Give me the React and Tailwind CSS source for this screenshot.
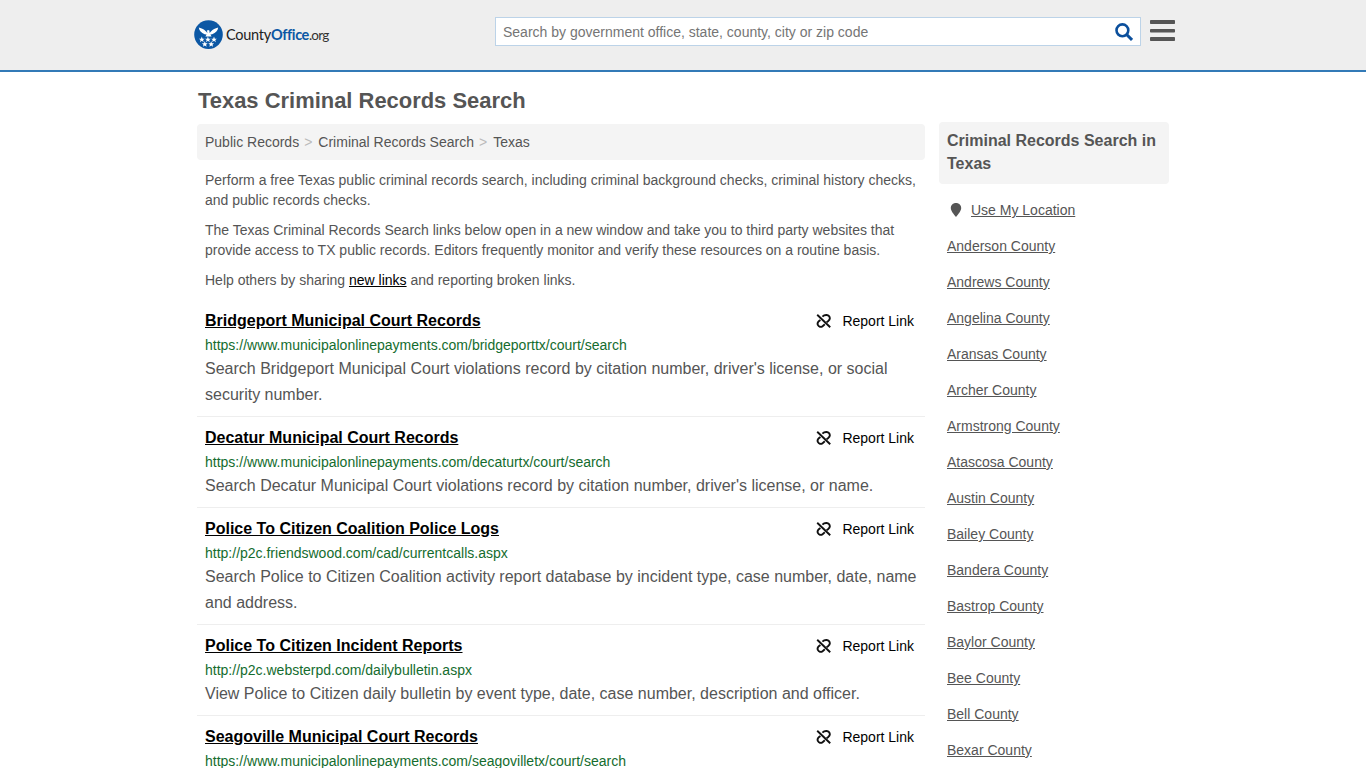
const counties = [
  'Anderson County',
  'Andrews County',
  'Angelina County',
  'Aransas County',
  'Archer County',
  'Armstrong County',
  'Atascosa County',
  'Austin County',
  'Bailey County',
  'Bandera County',
  'Bastrop County',
  'Baylor County',
  'Bee County',
  'Bell County',
  'Bexar County',
];

const records = [
  {
    title: 'Bridgeport Municipal Court Records',
    url: 'https://www.municipalonlinepayments.com/bridgeporttx/court/search',
    text: "Search Bridgeport Municipal Court violations record by citation number, driver's license, or social security number.",
  },
  {
    title: 'Decatur Municipal Court Records',
    url: 'https://www.municipalonlinepayments.com/decaturtx/court/search',
    text: "Search Decatur Municipal Court violations record by citation number, driver's license, or name.",
  },
  {
    title: 'Police To Citizen Coalition Police Logs',
    url: 'http://p2c.friendswood.com/cad/currentcalls.aspx',
    text: 'Search Police to Citizen Coalition activity report database by incident type, case number, date, name and address.',
  },
  {
    title: 'Police To Citizen Incident Reports',
    url: 'http://p2c.websterpd.com/dailybulletin.aspx',
    text: 'View Police to Citizen daily bulletin by event type, date, case number, description and officer.',
  },
  {
    title: 'Seagoville Municipal Court Records',
    url: 'https://www.municipalonlinepayments.com/seagovilletx/court/search',
    text: '',
  },
];

const Logo = () => (
  <a href="#" className="flex items-center">
    <svg className="h-[29px] w-[29px]" viewBox="0 0 29 29">
      <circle cx="14.5" cy="14.6" r="14.3" fill="#0b57a4" />
      <g fill="#fff">
        {/* Eagle */}
        <path d="M4.8 7.6 C8 9 10.2 9.2 11.8 11.2 L13.4 13 L13.2 11.6 L12.6 11 L14 10 L15.4 10.6 L15.6 13 L17.2 11.2 C18.8 9.2 21 9 24.2 7.6 C23.8 10.6 21.8 13.2 18.2 14.2 L16.4 14.4 L17.6 16.6 L11.4 16.6 L12.6 14.4 L10.6 14.2 C7.2 13.2 5.2 10.6 4.8 7.6 Z" />
        {/* Stars */}
        {[[7.8, 19.6], [13.9, 19.6], [20, 19.6], [10.8, 24.2], [17.2, 24.2]].map(([x, y]) => (
          <path
            key={`${x}-${y}`}
            transform={`translate(${x} ${y}) scale(1.15)`}
            d="M0-2.6 .7-.8 2.5-.8 1.1.4 1.6 2.2 0 1.1-1.6 2.2-1.1.4-2.5-.8-.7-.8Z"
          />
        ))}
      </g>
    </svg>
    <span className="mt-[2px] ml-[3px] flex items-baseline font-[Lato,sans-serif] text-[14.5px] leading-none text-[#222]">
      <span className="tracking-[-0.25px]">County</span>
      <span className="font-bold tracking-[-0.4px] text-[#0b57a4]">Office</span>
      <span className="text-[13.5px] tracking-[-0.8px] text-[#333]">.org</span>
    </span>
  </a>
);

const BrokenLinkIcon = () => (
  <svg
    className="h-[14px] w-[15px]"
    viewBox="0 0 15 14"
    fill="none"
    stroke="#111"
    strokeWidth="1.9"
  >
    <path d="M1.2 .8 L14.2 13.2" />
    <path d="M6.4 2.6 C7.6 1.4 9 .9 10.6 1 C12.6 1.2 14 2.8 13.8 4.6 C13.7 5.8 12.9 6.4 12 7.2 L10.6 8.3" />
    <path d="M4.4 5.9 L2.8 7.2 C1.6 8.3 1.3 9.7 1.9 11 C2.7 12.9 5 13.4 6.6 12.2 L8.8 10.3" />
  </svg>
);

const Header = () => (
  <header className="h-[72px] border-b-2 border-[#337ab7] bg-[#eee]">
    <div className="mx-auto flex w-[980px] items-start pl-[1px]">
      <div className="w-[301px] shrink-0 pt-5">
        <Logo />
      </div>
      <div className="mt-[17px] flex h-[29px] w-[646px] shrink-0 items-center justify-between border border-[#bcd3e8] bg-white px-[7px]">
        <span className="text-sm text-[#757575]">
          Search by government office, state, county, city or zip code
        </span>
        <svg className="h-[18px] w-[18px]" viewBox="0 0 18 18" fill="none" stroke="#0b4f9c">
          <circle cx="7.4" cy="7.3" r="5.9" strokeWidth="2.6" />
          <path d="M11.6 11.5 L17 16.9" strokeWidth="3" />
        </svg>
      </div>
      <svg className="mt-5 ml-[9px] h-[22px] w-[25px] shrink-0" viewBox="0 0 25 22" fill="#555">
        <rect width="25" height="4" rx=".8" />
        <rect y="9" width="25" height="3.5" rx=".8" />
        <rect y="17" width="25" height="4" rx=".8" />
      </svg>
    </div>
  </header>
);

const RecordItem = ({ title, url, text }) => (
  <li className="border-b border-[#eee] px-2 py-2">
    <div className="flex h-[25px] items-center justify-between">
      <a href="#" className="text-base font-bold text-black underline">
        {title}
      </a>
      <a href="#" className="flex items-center gap-[11px] pr-[3px] text-sm text-black">
        <BrokenLinkIcon />
        Report Link
      </a>
    </div>
    <div className="pt-[2px] text-sm leading-[21px] text-[#146c2e]">{url}</div>
    <p className="-mr-1 text-base leading-[26px]">{text}</p>
  </li>
);

const Sidebar = () => (
  <aside className="mt-[50px] w-[230px]">
    <h2 className="rounded bg-[#f4f4f4] px-2 pt-[7px] pb-[9px] text-base leading-[23px] font-bold">
      Criminal Records Search in Texas
    </h2>
    <ul className="mt-2 px-2 text-sm">
      <li className="flex h-9 items-center">
        <svg className="mr-[9px] ml-[3px] h-[14px] w-3" viewBox="0 0 12 14" fill="#555">
          <path d="M6 0 C9.1 0 11.2 2.2 11.2 5 C11.2 8 8 11.5 6 14 C4 11.5 .8 8 .8 5 C.8 2.2 2.9 0 6 0 Z" />
        </svg>
        <a href="#" className="underline">Use My Location</a>
      </li>
      {counties.map((county) => (
        <li key={county} className="flex h-9 items-center">
          <a href="#" className="underline">{county}</a>
        </li>
      ))}
    </ul>
  </aside>
);

const App = () => {
  return (
    <div className="h-screen overflow-hidden bg-white font-['Liberation_Sans',Arial,sans-serif] text-[#555]">
      <Header />
      <div className="mx-auto flex w-[980px] gap-[14px] pl-1">
        <main className="w-[728px]">
          <h1 className="mt-[15px] pl-[1px] text-[21.95px] leading-7 font-bold">
            Texas Criminal Records Search
          </h1>
          <nav className="mt-[9px] flex h-9 items-center rounded bg-[#f4f4f4] px-2 text-sm">
            <a href="#">Public Records</a>
            <span className="mr-[6px] ml-[5px] text-[#bbb]">&gt;</span>
            <a href="#">Criminal Records Search</a>
            <span className="mr-[6px] ml-[5px] text-[#bbb]">&gt;</span>
            <span>Texas</span>
          </nav>
          <div className="mt-[10px] space-y-[10px] px-2 text-sm leading-5">
            <p>
              Perform a free Texas public criminal records search, including criminal background
              checks, criminal history checks, and public records checks.
            </p>
            <p>
              The Texas Criminal Records Search links below open in a new window and take you to
              third party websites that provide access to TX public records. Editors frequently
              monitor and verify these resources on a routine basis.
            </p>
            <p>
              Help others by sharing <a href="#" className="text-black underline">new links</a> and
              reporting broken links.
            </p>
          </div>
          <ul className="mt-[10px]">
            {records.map((record) => (
              <RecordItem key={record.title} {...record} />
            ))}
          </ul>
        </main>
        <Sidebar />
      </div>
    </div>
  );
};

export default App;
